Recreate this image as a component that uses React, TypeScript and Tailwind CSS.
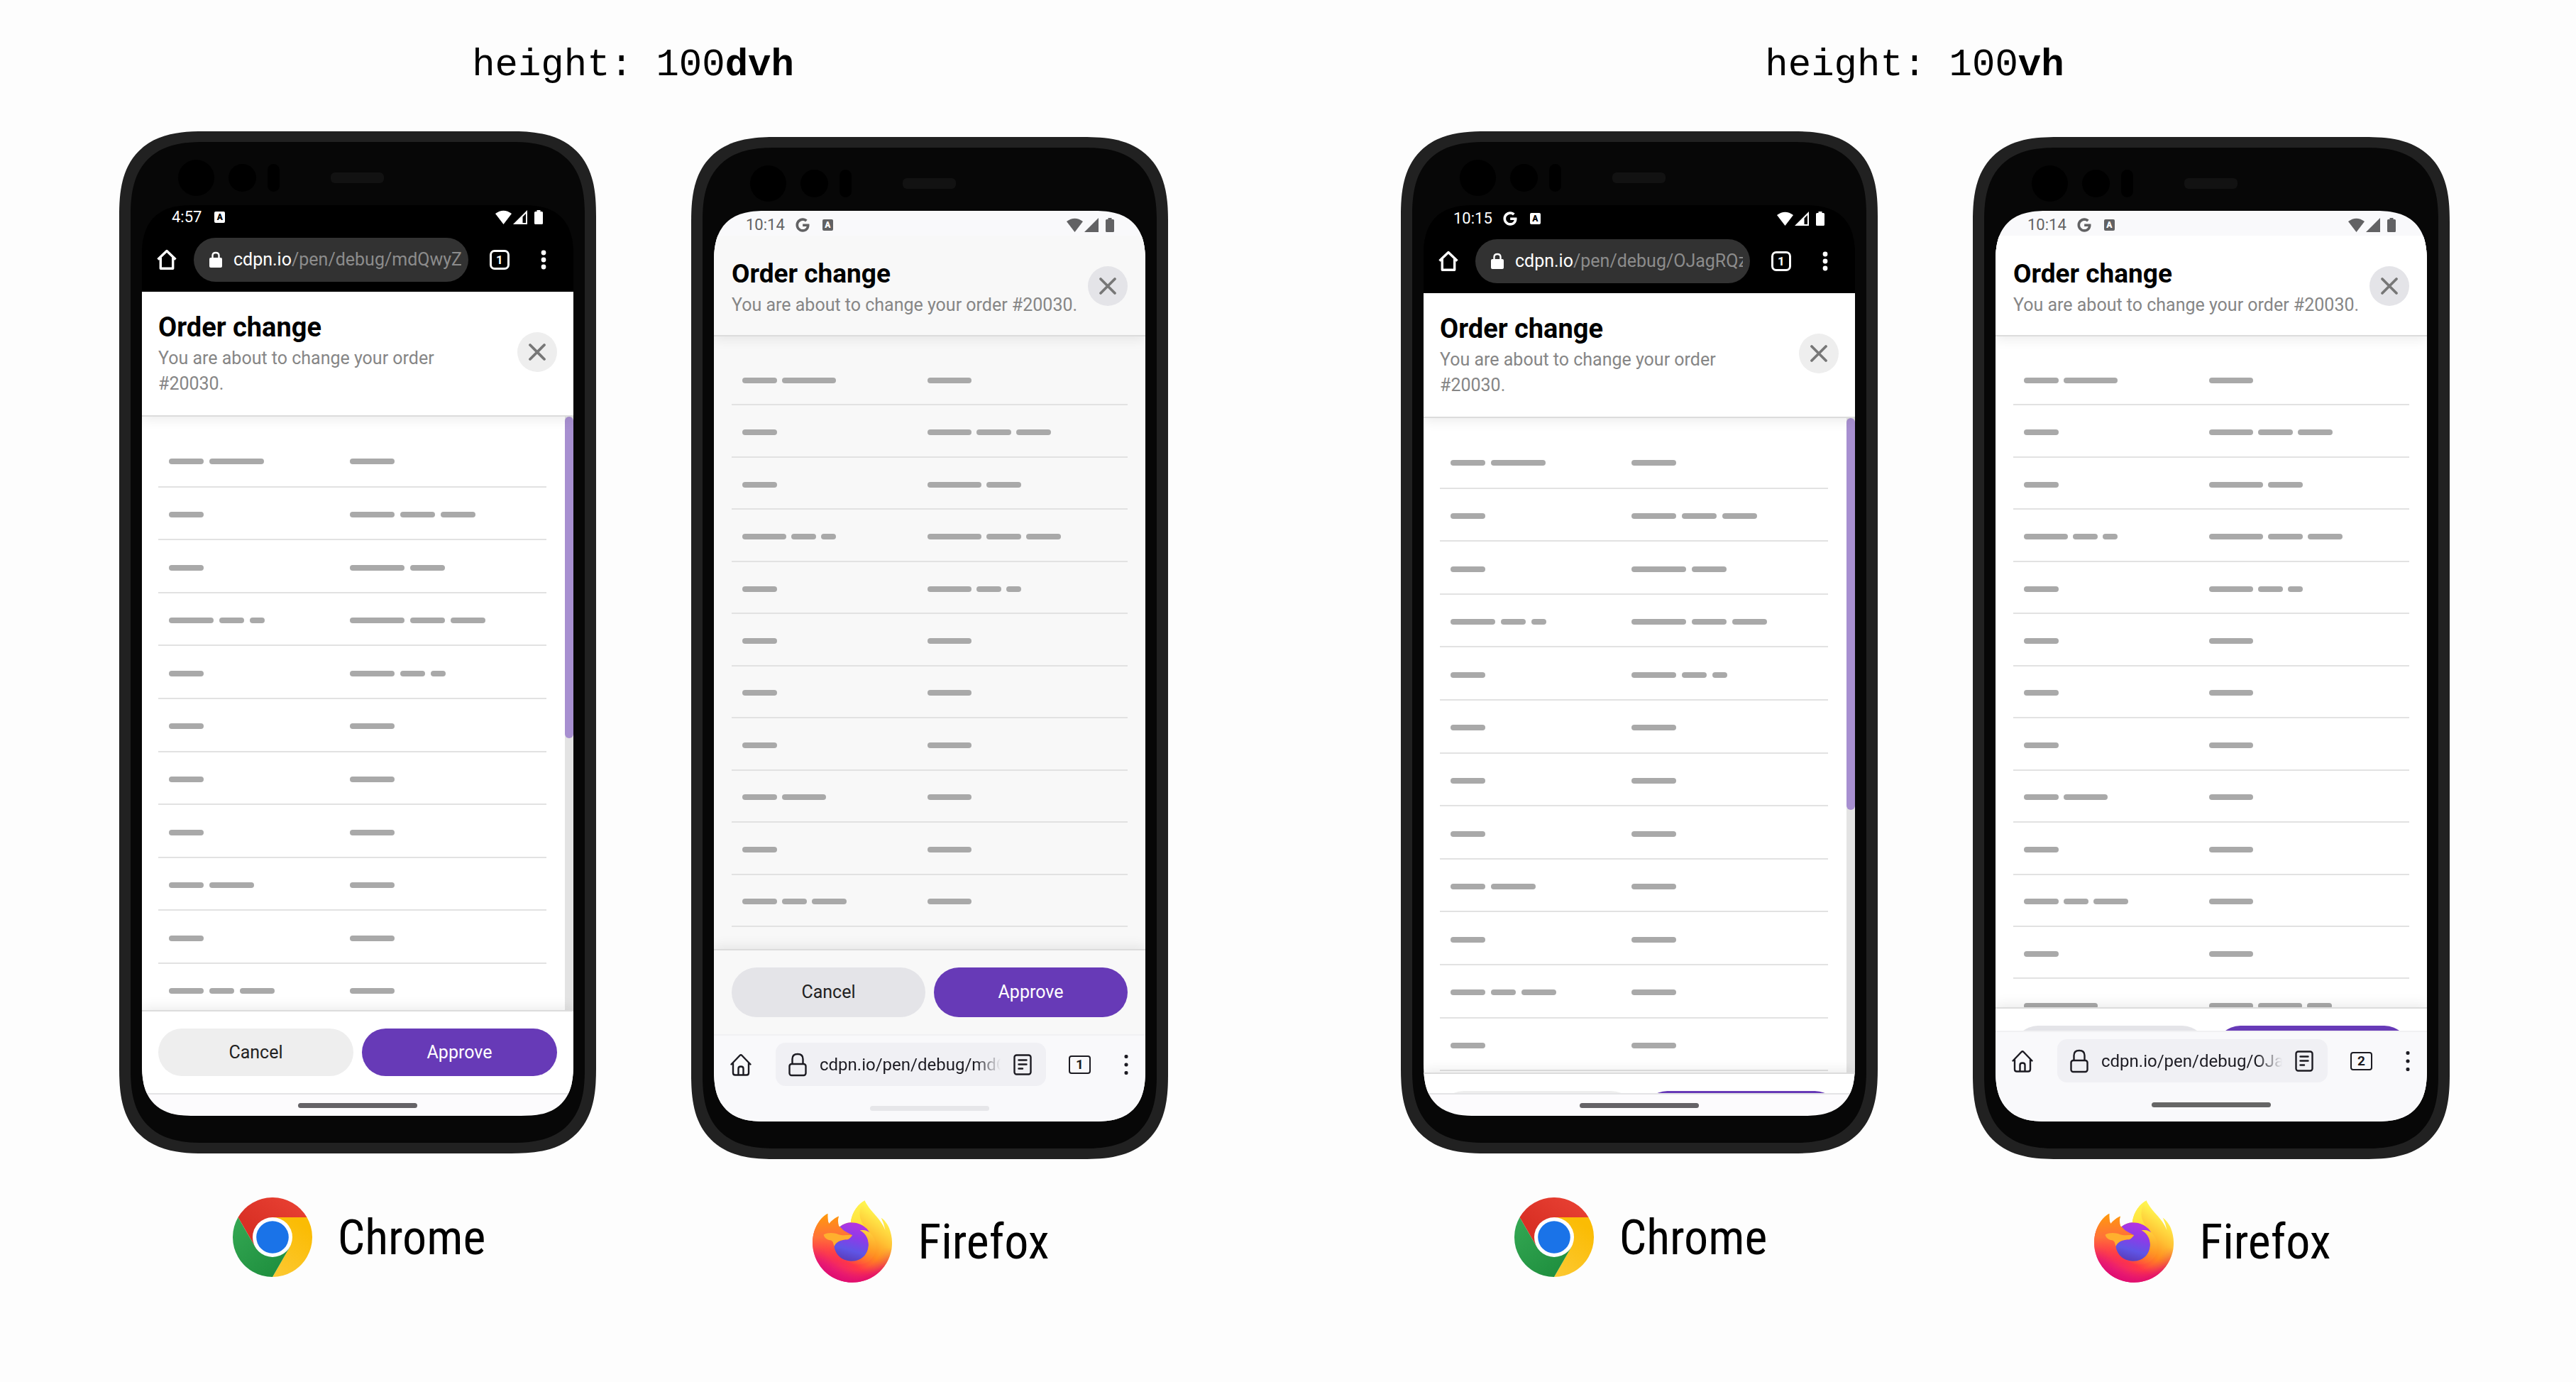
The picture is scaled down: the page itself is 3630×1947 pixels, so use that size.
import React from "react";
import { FaGoogle } from "react-icons/fa";

type Browser = "chrome" | "firefox";
type Size = "xs" | "sm" | "md" | "lg" | "xl" | "xxl";
type Row = [Size[], Size[]];

const rows: Row[] = [
  [["md", "xl"], ["lg"]],
  [["md"], ["lg", "md", "md"]],
  [["md"], ["xl", "md"]],
  [["lg", "sm", "xs"], ["xl", "md", "md"]],
  [["md"], ["lg", "sm", "xs"]],
  [["md"], ["lg"]],
  [["md"], ["lg"]],
  [["md"], ["lg"]],
  [["md", "lg"], ["lg"]],
  [["md"], ["lg"]],
  [["md", "sm", "md"], ["lg"]],
  [["md"], ["lg"]],
  [["xxl"], ["lg", "lg", "sm"]],
];

const barWidth: Record<Browser, Record<Size, string>> = {
  chrome: { xs: "w-[21px]", sm: "w-[35px]", md: "w-[49px]", lg: "w-[63px]", xl: "w-[77px]", xxl: "w-[106px]" },
  firefox: { xs: "w-[21px]", sm: "w-[35px]", md: "w-[49px]", lg: "w-[62px]", xl: "w-[76px]", xxl: "w-[104px]" },
};

function Bars({ sizes, browser }: { sizes: Size[]; browser: Browser }) {
  return (
    <div className={`flex ${browser === "chrome" ? "gap-2" : "gap-[7px]"}`}>
      {sizes.map((s, i) => (
        <span key={i} className={`h-2 rounded-full bg-[#a9a9a9] ${barWidth[browser][s]}`} />
      ))}
    </div>
  );
}

function OrderTable({ browser }: { browser: Browser }) {
  const height = browser === "chrome" ? "h-[970px]" : "h-[955px]";
  return (
    <table aria-label="Order lines" className={`w-full table-fixed border-separate border-spacing-0 ${height}`}>
      <colgroup>
        <col className="w-[46.7%]" />
        <col />
      </colgroup>
      <tbody>
        {rows.map(([a, b], i) => (
          <tr key={i}>
            <td className="border-b-2 border-[#e2e2e2] px-[15px] pt-1 align-middle"><Bars sizes={a} browser={browser} /></td>
            <td className="border-b-2 border-[#e2e2e2] px-[15px] pt-1 align-middle"><Bars sizes={b} browser={browser} /></td>
          </tr>
        ))}
      </tbody>
    </table>
  );
}

/* ---------- status bar ---------- */

function StatusBar({ time, google, dark, className }: { time: string; google: boolean; dark: boolean; className: string }) {
  const fill = dark ? "text-white" : "text-[#626264]";
  const badge = dark ? "bg-white text-black" : "bg-[#626264] text-white";
  return (
    <div className={`flex shrink-0 items-start justify-between ${fill} ${className}`}>
      <div className="flex items-center">
        <span className="text-[22px] leading-[26px]">{time}</span>
        {google && <FaGoogle className="ml-[15px] size-5" aria-hidden />}
        <span className={`ml-[18px] flex h-4 w-[15px] items-center justify-center rounded-[2px] text-[12px] leading-none font-black ${badge}`}>A</span>
      </div>
      <div className="flex h-[26px] items-center">
        <svg viewBox="0 0 23 20" className="h-5 w-[23px]" fill="currentColor" aria-hidden>
          <path d="M0 5Q11.500-3.500 23 5L11.500 20Z" />
        </svg>
        <svg viewBox="0 0 20 20" className="ml-0.5 size-5" fill="currentColor" aria-hidden>
          {dark ? (
            <path fillRule="evenodd" d="M20 0V20H0ZM18 5L13.500 9.500V18H18Z" />
          ) : (
            <path d="M20 0V20H0Z" />
          )}
        </svg>
        <svg viewBox="0 0 12 20" className="ml-2.5 h-5 w-3" fill="currentColor" aria-hidden>
          <path d="M3.500 0H8.500V2H10.500Q12 2 12 3.500V18.500Q12 20 10.500 20H1.500Q0 20 0 18.500V3.500Q0 2 1.500 2H3.500Z" />
        </svg>
      </div>
    </div>
  );
}

/* ---------- browser bars ---------- */

function ChromeBar({ path }: { path: string }) {
  return (
    <nav className="flex shrink-0 items-center bg-black pr-[38px] pb-3.5 pl-[21px] text-white">
      <button aria-label="Home">
        <svg viewBox="0 0 28 30" className="h-[30px] w-7" fill="none" stroke="currentColor" strokeWidth="3.400" aria-hidden>
          <path d="M1.500 14.500L14 2.500L26.500 14.500M5.300 12V27.300H22.700V12" strokeLinejoin="round" />
        </svg>
      </button>
      <button className="ml-6 flex h-[62px] flex-1 items-center overflow-hidden rounded-full bg-[#323232] pr-2.5 pl-[22px]">
        <svg viewBox="0 0 18 24" className="h-6 w-[18px] shrink-0" aria-hidden>
          <rect x="0" y="9" width="18" height="14" rx="2" fill="currentColor" />
          <path d="M4.500 10V6Q4.500 2 9 2T13.500 6V10" fill="none" stroke="currentColor" strokeWidth="2.400" />
        </svg>
        <span className="ml-4 min-w-0 flex-1 overflow-hidden text-left text-[25px] leading-8 whitespace-nowrap">
          cdpn.io<span className="text-[#8c8c8c]">{path}</span>
        </span>
      </button>
      <button className="ml-[30px] flex size-7 items-center justify-center rounded-[7px] border-3 border-white text-[17px] leading-none font-bold" aria-label="1 open tab">
        1
      </button>
      <button aria-label="Menu" className="ml-[44px]">
        <svg viewBox="0 0 8 28" className="h-7 w-2" fill="currentColor" aria-hidden>
          <circle cx="4" cy="4" r="3.400" />
          <circle cx="4" cy="14" r="3.400" />
          <circle cx="4" cy="24" r="3.400" />
        </svg>
      </button>
    </nav>
  );
}

function FirefoxBar({ url, tabs }: { url: string; tabs: number }) {
  return (
    <nav className="flex items-center pr-6 pl-[23px] text-[#1c1b22]">
      <button aria-label="Home">
        <svg viewBox="0 0 30 32" className="h-8 w-[30px]" fill="none" stroke="currentColor" strokeWidth="2.400" strokeLinecap="round" strokeLinejoin="round" aria-hidden>
          <path d="M1.500 15.500L13.500 3Q15 1.500 16.500 3L28.500 15.500M4 14V27.500Q4 30.500 7 30.500H23Q26 30.500 26 27.500V14M11.500 30V21.500Q11.500 18.500 15 18.500T18.500 21.500V30" />
        </svg>
      </button>
      <div className="ml-[34px] flex h-[61px] min-w-0 flex-1 items-center rounded-[14px] bg-[#f0f0f4] pr-5 pl-[18px]">
        <svg viewBox="0 0 26 34" className="h-[34px] w-[26px] shrink-0" fill="none" stroke="currentColor" strokeWidth="2.400" aria-hidden>
          <rect x="1.500" y="16" width="23" height="16" rx="3" />
          <path d="M5.500 16V9Q5.500 2 13 2T20.500 9V16" />
        </svg>
        <input
          aria-label="Address"
          readOnly
          defaultValue={url}
          className="ml-[18px] h-10 min-w-0 flex-1 bg-transparent text-[24px] outline-none [mask-image:linear-gradient(to_right,black_86%,transparent)]"
        />
        <button aria-label="Reader view" className="ml-[18px] shrink-0">
          <svg viewBox="0 0 26 30" className="h-[30px] w-[26px]" fill="none" stroke="currentColor" strokeWidth="2.400" strokeLinecap="round" aria-hidden>
            <rect x="1.500" y="1.500" width="23" height="27" rx="3" />
            <path d="M7.500 8.500H18.500M7.500 14.500H18.500M7.500 20.500H13" />
          </svg>
        </button>
      </div>
      <button aria-label={`${tabs} open tabs`} className="ml-8 flex h-[26px] w-[31px] items-center justify-center rounded-[4px] border-2 border-[#1c1b22] text-[19px] leading-none font-bold">
        {tabs}
      </button>
      <button aria-label="Menu" className="ml-[47px]">
        <svg viewBox="0 0 6 30" className="h-[30px] w-1.5" fill="currentColor" aria-hidden>
          <rect x="0.500" y="1" width="5" height="5" rx="2" />
          <rect x="0.500" y="12.500" width="5" height="5" rx="2" />
          <rect x="0.500" y="24" width="5" height="5" rx="2" />
        </svg>
      </button>
    </nav>
  );
}

/* ---------- the order dialog ---------- */

type DialogProps = { browser: Browser; surface: string; pageHeight: string; thumb?: string };

function OrderDialog({ browser, surface, pageHeight, thumb }: DialogProps) {
  const chrome = browser === "chrome";
  const pad = chrome ? "px-[23px]" : "px-[25px]";
  const soft = chrome ? "bg-[#eeeeee]" : "bg-[#e4e4e8]";
  return (
    <div className={`flex flex-col ${surface} ${pageHeight}`}>
      <header
        className={`z-10 flex shrink-0 items-center justify-between border-b-2 border-[#dcdcdc] shadow-[0_4px_16px_rgba(0,0,0,0.08)] ${surface} ${pad} ${chrome ? "pt-[22px] pb-[26px]" : "pt-[26px] pb-6"}`}
      >
        <div className={`pt-1.5 ${chrome ? "max-w-[420px]" : ""}`}>
          <h2 className={`leading-[44px] font-bold text-black ${chrome ? "text-[38px]" : "text-[37px]"}`}>Order change</h2>
          <p className="mt-1 text-[25px] leading-9 text-[#868686]">You are about to change your order #20030.</p>
        </div>
        <button aria-label="Close" className={`flex size-14 shrink-0 items-center justify-center rounded-full text-[#777777] ${soft}`}>
          <svg viewBox="0 0 26 26" className="size-[26px]" fill="none" stroke="currentColor" strokeWidth="3.800" strokeLinecap="round" aria-hidden>
            <path d="M3 3L23 23M23 3L3 23" />
          </svg>
        </button>
      </header>
      <div className="flex min-h-0 flex-1 overflow-hidden">
        <div className={`flex-1 ${chrome ? "pt-[25px] pr-[26px] pl-[23px]" : "px-[25px] pt-6"}`}>
          <OrderTable browser={browser} />
        </div>
        {thumb && (
          <div className="w-3 shrink-0 bg-[#e3e3e3]">
            <div className={`w-full rounded-full bg-[#a78fd0] ${thumb}`} />
          </div>
        )}
      </div>
      <footer
        className={`z-10 grid shrink-0 grid-cols-2 gap-3 border-t-2 border-[#dcdcdc] py-6 shadow-[0_-4px_16px_rgba(0,0,0,0.08)] ${surface} ${pad}`}
      >
        <button className={`rounded-full text-[25px] text-[#222222] ${soft} ${chrome ? "h-[67px]" : "h-[70px]"}`}>Cancel</button>
        <button className={`rounded-full bg-[#673ab7] text-[25px] text-white ${chrome ? "h-[67px]" : "h-[70px]"}`}>Approve</button>
      </footer>
    </div>
  );
}

/* ---------- device ---------- */

function Phone({ children, black }: { children: React.ReactNode; black?: boolean }) {
  return (
    <div className="rounded-[98px] border-x-[16px] border-y-[15px] border-[#212121] bg-[#070707] px-4 pb-[38px] supports-[corner-shape:squircle]:rounded-[120px] supports-[corner-shape:squircle]:[corner-shape:superellipse(1.4)]">
      <div className="flex h-[89px] items-center pt-3 pl-[51px]">
        <span className="size-[51px] rounded-full bg-black" />
        <span className="ml-5 size-[39px] rounded-full bg-black" />
        <span className="ml-4 h-[39px] w-[17px] rounded-full bg-black" />
        <span className="ml-[72px] h-[15px] w-[75px] rounded-md bg-[#121212]" />
      </div>
      <div
        className={`flex h-[1283px] flex-col overflow-hidden rounded-[60px] supports-[corner-shape:squircle]:rounded-[74px] supports-[corner-shape:squircle]:[corner-shape:superellipse(1.4)] ${black ? "bg-black" : "bg-[#f9f9fb]"}`}
      >
        {children}
      </div>
    </div>
  );
}

function ChromePhone({ time, google, path, thumb, pageHeight, barHeight }: { time: string; google: boolean; path: string; thumb: string; pageHeight: string; barHeight: string }) {
  return (
    <Phone black>
      <StatusBar time={time} google={google} dark className={`pr-[43px] pl-[42px] ${barHeight}`} />
      <ChromeBar path={path} />
      <div className="min-h-0 flex-1 overflow-hidden">
        <OrderDialog browser="chrome" surface="bg-white" pageHeight={pageHeight} thumb={thumb} />
      </div>
      <div className="z-10 flex h-8 shrink-0 items-center justify-center border-t-2 border-[#e4e4e6] bg-[#fcfbfd]">
        <span className="h-[7px] w-[168px] rounded-full bg-[#656367]" />
      </div>
    </Phone>
  );
}

function FirefoxPhone({ url, tabs, surface, pageHeight, pill, barHeight }: { url: string; tabs: number; surface: string; pageHeight: string; pill: string; barHeight: string }) {
  return (
    <Phone>
      <StatusBar time="10:14" google dark={false} className="h-[35px] pt-[7px] pr-11 pl-[45px]" />
      <div className="min-h-0 flex-1 overflow-hidden">
        <OrderDialog browser="firefox" surface={surface} pageHeight={pageHeight} />
      </div>
      <div className={`z-10 flex shrink-0 flex-col justify-between border-t-2 border-[#f1f1f3] bg-[#f9f9fb] pt-2.5 ${barHeight}`}>
        <FirefoxBar url={url} tabs={tabs} />
        <span className={`h-[7px] w-[168px] self-center rounded-full ${pill}`} />
      </div>
    </Phone>
  );
}

/* ---------- logos ---------- */

function ChromeLogo() {
  return (
    <svg viewBox="0 0 112 112" className="size-28" aria-hidden>
      <defs>
        <linearGradient id="cr" x1="0" y1="1" x2="1" y2="0">
          <stop offset="0.3" stopColor="#d93025" />
          <stop offset="1" stopColor="#ea4335" />
        </linearGradient>
        <linearGradient id="cy" x1="0" y1="1" x2="0.500" y2="0">
          <stop offset="0" stopColor="#fcc934" />
          <stop offset="1" stopColor="#fbbc04" />
        </linearGradient>
        <linearGradient id="cg" x1="0.800" y1="1" x2="0" y2="0">
          <stop offset="0" stopColor="#1e8e3e" />
          <stop offset="1" stopColor="#34a853" />
        </linearGradient>
      </defs>
      <path fill="url(#cr)" d="M7.500 28A56 56 0 0 1 104.500 28L56 29L31.750 70Z" />
      <path fill="url(#cy)" d="M104.500 28A56 56 0 0 1 56 112L80.250 70L56 28Z" />
      <path fill="url(#cg)" d="M56 112A56 56 0 0 1 7.500 28L31.750 70L80.250 70Z" />
      <circle cx="56" cy="56" r="28" fill="#fff" />
      <circle cx="56" cy="56" r="22.800" fill="#1a73e8" />
    </svg>
  );
}

function FirefoxLogo() {
  return (
    <svg viewBox="0 0 77.420 79.970" className="h-[116px] w-28" aria-hidden>
      <defs>
        <linearGradient id="fa" x1="70.790" y1="12.390" x2="24" y2="80" gradientUnits="userSpaceOnUse">
          <stop offset="0.050" stopColor="#fff44f" />
          <stop offset="0.300" stopColor="#ffc033" />
          <stop offset="0.500" stopColor="#ff8a1f" />
          <stop offset="0.720" stopColor="#ff3647" />
          <stop offset="1" stopColor="#e31587" />
        </linearGradient>
        <linearGradient id="fl" x1="20" y1="14" x2="22" y2="62" gradientUnits="userSpaceOnUse">
          <stop offset="0" stopColor="#ff980e" />
          <stop offset="0.450" stopColor="#ff7139" />
          <stop offset="1" stopColor="#ff3647" stopOpacity="0" />
        </linearGradient>
        <radialGradient id="fb" cx="40" cy="38" r="42" gradientUnits="userSpaceOnUse">
          <stop offset="0.700" stopColor="#e00e76" stopOpacity="0" />
          <stop offset="1" stopColor="#e00e6e" />
        </radialGradient>
        <linearGradient id="fm" x1="0" y1="46" x2="0" y2="72" gradientUnits="userSpaceOnUse">
          <stop offset="0" stopColor="#fff" stopOpacity="0" />
          <stop offset="1" stopColor="#fff" />
        </linearGradient>
        <mask id="fk" maskUnits="userSpaceOnUse" x="0" y="0" width="78" height="80">
          <rect width="78" height="80" fill="url(#fm)" />
        </mask>
        <linearGradient id="fe" x1="46" y1="22" x2="36" y2="58" gradientUnits="userSpaceOnUse">
          <stop offset="0" stopColor="#b833e1" />
          <stop offset="0.400" stopColor="#8d3be8" />
          <stop offset="0.750" stopColor="#5f55e6" />
          <stop offset="1" stopColor="#5a40c0" />
        </linearGradient>
        <linearGradient id="fd" x1="50" y1="0" x2="58" y2="48" gradientUnits="userSpaceOnUse">
          <stop offset="0" stopColor="#fff44f" />
          <stop offset="0.500" stopColor="#ffdf3a" />
          <stop offset="1" stopColor="#ffbd2f" />
        </linearGradient>
        <linearGradient id="fs" x1="54" y1="29" x2="44" y2="66" gradientUnits="userSpaceOnUse">
          <stop offset="0" stopColor="#ffd23c" />
          <stop offset="0.500" stopColor="#ff9a24" />
          <stop offset="1" stopColor="#ff5a36" stopOpacity="0" />
        </linearGradient>
      </defs>
      <path
        fill="url(#fa)"
        d="M74.616 26.827c-1.684-4.052-5.100-8.427-7.775-9.810a40.266 40.266 0 0 1 3.925 11.764l.007.065C66.391 17.920 58.962 13.516 52.900 3.929c-.307-.485-.614-.971-.913-1.484-.171-.293-.308-.557-.427-.8a7.053 7.053 0 0 1-.578-1.535.1.1 0 0 0-.088-.1c-9.735 5.700-13.338 16.243-13.642 21.521a19.387 19.387 0 0 0-10.666 4.111 11.587 11.587 0 0 0-1-.757 17.968 17.968 0 0 1-.109-9.473 28.705 28.705 0 0 0-9.329 7.210h-.018c-1.536-1.947-1.428-8.367-1.340-9.708a6.928 6.928 0 0 0-1.294.687 28.225 28.225 0 0 0-3.788 3.245 33.845 33.845 0 0 0-3.623 4.347 32.733 32.733 0 0 0-5.200 11.743l-.052.256a61.890 61.890 0 0 0-.381 2.420A36.937 36.937 0 0 0 0 41.040v.2a38.759 38.759 0 0 0 76.954 6.554c.065-.5.118-.995.176-1.500a39.857 39.857 0 0 0-2.514-19.467z"
      />
      <path
        fill="url(#fl)"
        d="M26.500 25.700a11.587 11.587 0 0 0-1-.757 17.968 17.968 0 0 1-.109-9.473 28.705 28.705 0 0 0-9.329 7.210c-1.536-1.947-1.428-8.367-1.340-9.708C6 17 0 30 0 41.240c0 12 6 22 14 29L40 62L21.148 44.745L34 38L38.600 33.800Z"
      />
      <circle cx="38.700" cy="41.240" r="38.700" fill="url(#fb)" mask="url(#fk)" />
      <path
        fill="url(#fe)"
        d="M38.619 33.789c-.064.964-3.470 4.289-4.661 4.289-11.021 0-12.810 6.667-12.810 6.667.488 5.614 4.400 10.238 9.129 12.684.216.112.435.213.654.312q.569.252 1.138.466a17.235 17.235 0 0 0 5.043.973c19.317.906 23.059-23.100 9.119-30.066a13.380 13.380 0 0 1 9.345 2.269A19.559 19.559 0 0 0 38.600 21.490c-.460 0-.910.038-1.362.069a19.387 19.387 0 0 0-10.666 4.111c.591.5 1.258 1.168 2.663 2.553 2.630 2.591 9.375 5.275 9.390 5.590z"
      />
      <path
        fill="url(#fd)"
        d="M55.582 31.409c.084.059.162.118.241.177a21.100 21.100 0 0 0-3.600-4.695C40.173 14.842 49.063.766 50.562.051l.015-.022c-9.735 5.700-13.038 16.252-13.342 21.530.452-.031.900-.069 1.362-.069a19.559 19.559 0 0 1 16.985 9.919z"
      />
      <path
        fill="url(#fs)"
        d="M46.230 29.110a13.380 13.380 0 0 1 9.345 2.269C62 37 63.500 46 60 53C55 63 42 66 30.510 57.446C32 58.500 34.500 59.200 37.110 59.180C56.430 60.090 60.170 36.080 46.230 29.110Z"
      />
      <path fill="#ffb02e" d="M38.619 33.789C38.500 34.800 35.200 38.078 33.958 38.078C22.937 38.078 21.148 44.745 21.148 44.745C20 42 20.500 39.800 17.500 38.800C14 38.500 11.500 36.500 10.800 33.500C15 31 21 31.500 25 33C29 34.600 34 33.400 38.619 33.789Z" />
    </svg>
  );
}

function Caption({ browser }: { browser: Browser }) {
  const chrome = browser === "chrome";
  return (
    <figcaption className={`flex items-center justify-center gap-9 pl-1 font-['Roboto_Condensed',Roboto,sans-serif] text-[68px] leading-[72px] text-black ${chrome ? "pt-[62px]" : "pt-[58px]"}`}>
      {chrome ? <ChromeLogo /> : <FirefoxLogo />}
      <span className="pt-0.5">{chrome ? "Chrome" : "Firefox"}</span>
    </figcaption>
  );
}

function Comparison({ unit, left, right }: { unit: string; left: React.ReactNode; right: React.ReactNode }) {
  return (
    <section>
      <h1 className="pr-[30px] text-center font-['Liberation_Mono',monospace] text-[54px] leading-[64px] text-black">
        height: 100<b>{unit}</b>
      </h1>
      <div className="mt-[61px] grid grid-cols-[672px_672px] gap-[134px]">
        <figure>
          {left}
          <Caption browser="chrome" />
        </figure>
        <figure className="pt-2">
          {right}
          <Caption browser="firefox" />
        </figure>
      </div>
    </section>
  );
}

export default function App() {
  return (
    <main className="flex min-h-screen justify-between bg-[#fdfdfd] pt-[60px] pr-[178px] pl-[168px] font-[Roboto,sans-serif]">
      <Comparison
        unit="dvh"
        left={<ChromePhone time="4:57" google={false} path="/pen/debug/mdQwyZ" thumb="h-[453px]" pageHeight="h-full" barHeight="h-[46px] pt-1" />}
        right={<FirefoxPhone url="cdpn.io/pen/debug/mdQwyZ" tabs={1} surface="bg-[#f8f8f8]" pageHeight="h-full" pill="bg-[#e6e6e9]" barHeight="h-[123px] pb-[15px]" />}
      />
      <Comparison
        unit="vh"
        left={<ChromePhone time="10:15" google path="/pen/debug/OJagRQz" thumb="h-[552px]" pageHeight="h-[calc(100%+88px)]" barHeight="h-[48px] pt-1.5" />}
        right={<FirefoxPhone url="cdpn.io/pen/debug/OJagRQz" tabs={2} surface="bg-white" pageHeight="h-[calc(100%+87px)]" pill="bg-[#666666]" barHeight="h-[128px] pb-5" />}
      />
    </main>
  );
}
